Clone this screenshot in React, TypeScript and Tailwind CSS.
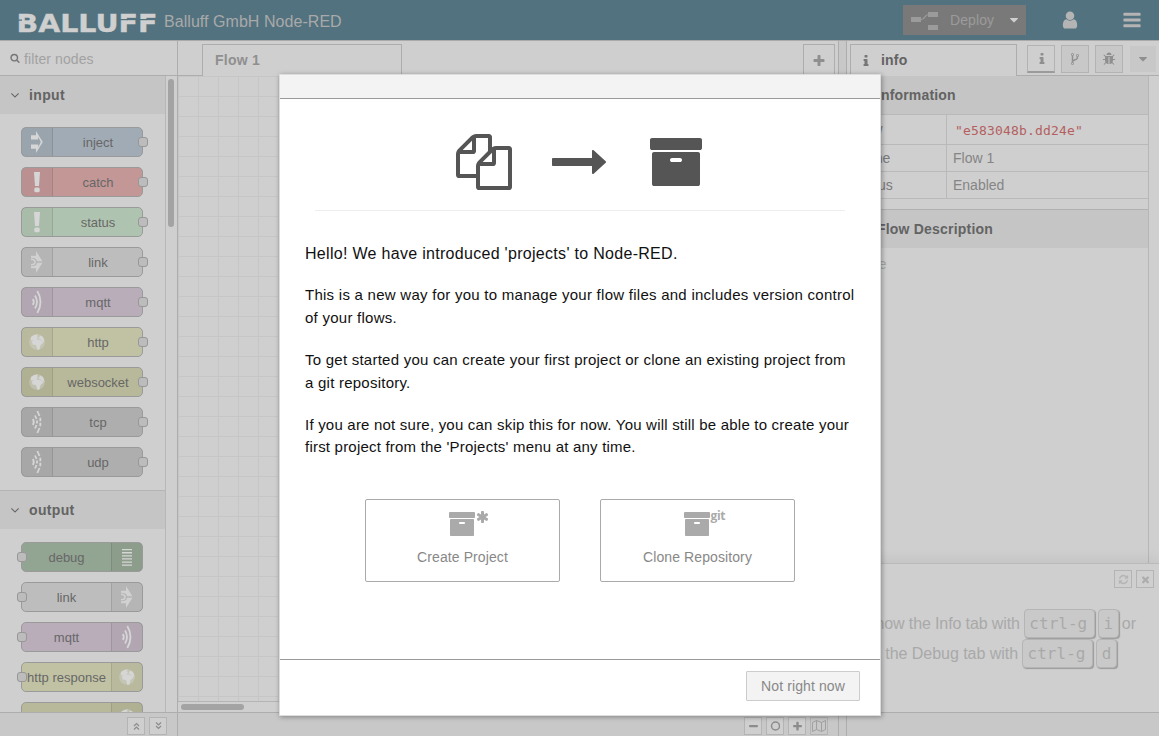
import React from "react";

const ICONS = {
  archive:
    "M1088 832q0-26-19-45t-45-19h-256q-26 0-45 19t-19 45 19 45 45 19h256q26 0 45-19t19-45zm576-192v960q0 26-19 45t-45 19h-1408q-26 0-45-19t-19-45v-960q0-26 19-45t45-19h1408q26 0 45 19t19 45zm64-448v256q0 26-19 45t-45 19h-1536q-26 0-45-19t-19-45v-256q0-26 19-45t45-19h1536q26 0 45 19t19 45z",
  files:
    "M1696 384q40 0 68 28t28 68v1216q0 40-28 68t-68 28h-960q-40 0-68-28t-28-68v-288h-544q-40 0-68-28t-28-68v-672q0-40 20-88t48-76l408-408q28-28 76-48t88-20h416q40 0 68 28t28 68v328q68-40 128-40h416zm-544 213l-299 299h299v-299zm-640-384l-299 299h299v-299zm196 647l316-316v-416h-384v416q0 40-28 68t-68 28h-416v640h512v-256q0-40 20-88t48-76zm956 804v-1152h-384v416q0 40-28 68t-68 28h-416v640h896z",
  arrow:
    "M1728 893q0 14-10 24l-384 354q-16 14-35 6-19-9-19-29v-224h-1248q-14 0-23-9t-9-23v-192q0-14 9-23t23-9h1248v-224q0-21 19-29t35 5l384 350q10 10 10 23z",
  user:
    "M1536 1399q0 109-62.5 187t-150.5 78h-854q-88 0-150.5-78t-62.5-187q0-85 8.5-160.5t31.5-152 58.5-131 94-89 134.5-34.5q131 128 313 128t313-128q76 0 134.5 34.5t94 89 58.5 131 31.5 152 8.5 160.5zm-256-887q0 159-112.5 271.5t-271.5 112.5-271.5-112.5-112.5-271.5 112.5-271.5 271.5-112.5 271.5 112.5 112.5 271.5z",
  bars:
    "M1664 1344v128q0 26-19 45t-45 19h-1408q-26 0-45-19t-19-45v-128q0-26 19-45t45-19h1408q26 0 45 19t19 45zm0-512v128q0 26-19 45t-45 19h-1408q-26 0-45-19t-19-45v-128q0-26 19-45t45-19h1408q26 0 45 19t19 45zm0-512v128q0 26-19 45t-45 19h-1408q-26 0-45-19t-19-45v-128q0-26 19-45t45-19h1408q26 0 45 19t19 45z",
  search:
    "M1216 832q0-185-131.5-316.5t-316.5-131.5-316.5 131.5-131.5 316.5 131.5 316.5 316.5 131.5 316.5-131.5 131.5-316.5zm512 832q0 52-38 90t-90 38q-54 0-90-38l-343-342q-179 124-399 124-143 0-273.5-55.5t-225-150-150-225-55.5-273.5 55.5-273.5 150-225 225-150 273.5-55.5 273.5 55.5 225 150 150 225 55.5 273.5q0 220-124 399l343 343q37 37 37 90z",
  angle:
    "M1395 736q0 13-10 23l-466 466q-10 10-23 10t-23-10l-466-466q-10-10-10-23t10-23l50-50q10-10 23-10t23 10l393 393 393-393q10-10 23-10t23 10l50 50q10 10 10 23z",
  plus:
    "M1600 736v192q0 40-28 68t-68 28h-416v416q0 40-28 68t-68 28h-192q-40 0-68-28t-28-68v-416h-416q-40 0-68-28t-28-68v-192q0-40 28-68t68-28h416v-416q0-40 28-68t68-28h192q40 0 68 28t28 68v416h416q40 0 68 28t28 68z",
  minus:
    "M1600 736v192q0 40-28 68t-68 28h-1216q-40 0-68-28t-28-68v-192q0-40 28-68t68-28h1216q40 0 68 28t28 68z",
  info:
    "M1216 1344v128q0 26-19 45t-45 19h-512q-26 0-45-19t-19-45v-128q0-26 19-45t45-19h64v-384h-64q-26 0-45-19t-19-45v-128q0-26 19-45t45-19h384q26 0 45 19t19 45v576h64q26 0 45 19t19 45zm-128-1152v192q0 26-19 45t-45 19h-256q-26 0-45-19t-19-45v-192q0-26 19-45t45-19h256q26 0 45 19t19 45z",
  caret:
    "M1408 704q0 26-19 45l-448 448q-19 19-45 19t-45-19l-448-448q-19-19-19-45t19-45 45-19h896q26 0 45 19t19 45z",
  times:
    "M1490 1322q0 40-28 68l-136 136q-28 28-68 28t-68-28l-294-294-294 294q-28 28-68 28t-68-28l-136-136q-28-28-28-68t28-68l294-294-294-294q-28-28-28-68t28-68l136-136q28-28 68-28t68 28l294 294 294-294q28-28 68-28t68 28l136 136q28 28 28 68t-28 68l-294 294 294 294q28 28 28 68z",
  asterisk:
    "M1482 1050q46 26 59.5 77.5t-12.5 97.5l-64 110q-26 46-77.5 59.5t-97.5-12.5l-266-153v307q0 52-38 90t-90 38h-128q-52 0-90-38t-38-90v-307l-266 153q-46 26-97.5 12.5t-77.5-59.5l-64-110q-26-46-12.5-97.5t59.5-77.5l266-154-266-154q-46-26-59.5-77.5t12.5-97.5l64-110q26-46 77.5-59.5t97.5 12.5l266 153v-307q0-52 38-90t90-38h128q52 0 90 38t38 90v307l266-153q46-26 97.5-12.5t77.5 59.5l64 110q26 46 12.5 97.5t-59.5 77.5l-266 154z",
  refresh:
    "M1639 1056q0 5-1 7-64 268-268 434.5t-478 166.5q-146 0-282.5-55t-243.5-157l-129 129q-19 19-45 19t-45-19-19-45v-448q0-26 19-45t45-19h448q26 0 45 19t19 45-19 45l-137 137q71 66 161 102t187 36q134 0 250-65t186-179q11-17 53-117 8-23 30-23h192q13 0 22.5 9.5t9.5 22.5zm25-800v448q0 26-19 45t-45 19h-448q-26 0-45-19t-19-45 19-45l138-138q-148-137-349-137-134 0-250 65t-186 179q-11 17-53 117-8 23-30 23h-199q-13 0-22.5-9.5t-9.5-22.5v-7q65-268 270-434.5t480-166.5q146 0 284 55.5t245 156.5l130-129q19-19 45-19t45 19 19 45z",
  fork:
    "M672 1472q0-40-28-68t-68-28-68 28-28 68 28 68 68 28 68-28 28-68zm0-1152q0-40-28-68t-68-28-68 28-28 68 28 68 68 28 68-28 28-68zm640 128q0-40-28-68t-68-28-68 28-28 68 28 68 68 28 68-28 28-68zm96 0q0 52-26 96.5t-70 69.5q-2 287-226 414-67 38-203 81-128 40-169.5 71t-41.5 100v26q44 25 70 69.5t26 96.5q0 80-56 136t-136 56-136-56-56-136q0-52 26-96.5t70-69.5v-820q-44-25-70-69.5t-26-96.5q0-80 56-136t136-56 136 56 56 136q0 52-26 96.5t-70 69.5v497q54-26 154-57 55-17 87.5-29.5t70.5-31 59-39.5 40.5-51 28-69.5 8.5-91.5q-44-25-70-69.5t-26-96.5q0-80 56-136t136-56 136 56 56 136z",
  bug:
    "M1696 960q0 26-19 45t-45 19h-224q0 171-67 290l208 209q19 19 19 45t-19 45q-18 19-45 19t-45-19l-198-197q-5 5-15 13t-42 28.5-65 36.5-82 29-97 13v-896h-128v896q-51 0-101.5-13.5t-87-33-66-39-43.5-32.5l-15-14-183 207q-20 21-48 21-24 0-43-16-19-18-20.5-44.5t15.5-46.5l202-227q-58-114-58-274h-224q-26 0-45-19t-19-45 19-45 45-19h224v-294l-173-173q-19-19-19-45t19-45 45-19 45 19l173 173h844l173-173q19-19 45-19t45 19 19 45-19 45l-173 173v294h224q26 0 45 19t19 45zm-480-576h-640q0-133 93.5-226.5t226.5-93.5 226.5 93.5 93.5 226.5z",
};

function Icon({ name, className }: { name: keyof typeof ICONS; className: string }) {
  return (
    <svg viewBox="0 0 1792 1792" fill="currentColor" className={"shrink-0 " + className}>
      <path d={ICONS[name]} />
    </svg>
  );
}

type Glyph = "inject" | "alert" | "link" | "waves" | "globe" | "dashes" | "lines";

function NodeGlyph({ kind }: { kind: Glyph }) {
  return (
    <svg width="30" height="28" viewBox="0 0 30 28" className="block text-[#d6d6d6]" fill="currentColor">
      {kind === "inject" && <path d="M9 7.200h5V3L20.800 14 14 25v-4.200H9V16.500h7.200v2.700l2.600-5.200-2.600-5.200v2.700H9z" />}
      {kind === "alert" && (
        <>
          <path d="M12 4h6l-1 14h-4z" />
          <rect x="12.300" y="19.500" width="5.400" height="4.800" rx="1.500" />
        </>
      )}
      {kind === "link" && (
        <g opacity=".85">
          <path d="M14 3l6.500 10.300h-5.300a4.500 4.500 0 0 0-3-3.300L9 9.800V7.800h5zM14 25l6.500-10.300h-5.300a4.500 4.500 0 0 1-3 3.300L9 18.200v2h5z" />
          <path d="M9 11.300q4 0 4 2.700t-4 2.700" fill="none" stroke="currentColor" strokeWidth="1.600" />
        </g>
      )}
      {(kind === "waves" || kind === "dashes") && (
        <g fill="none" stroke="currentColor" strokeWidth="1.800">
          <path d="M10.800 11q2 3 0 6" />
          {kind === "waves" ? (
            <>
              <path d="M13 7.500q4 6.500 0 13" />
              <path d="M15.300 3q6.400 11 0 22" />
            </>
          ) : (
            <>
              <path d="M13 7.500l1.500 3.500M15 12.500v3M14.500 17l-1.500 3.500" />
              <path d="M15.300 3l2.200 5M18.300 9.700v3.600M18.300 14.700v3.600M17.500 20l-2.200 5" />
            </>
          )}
        </g>
      )}
      {kind === "globe" && (
        <>
          <circle cx="15" cy="14" r="7.800" opacity=".4" />
          <path d="M9 9q3-3 7-2.500l-1.500 2 2 .5-2.500 2.500-3 .5-2 .5zM10 13l4-2 5 1.500 2.500 2-3 2.500-1 4.500-2 .5-1.500-5-3.500-.5zM18 7.500l3 1.500 1.500 4.500-2 0-2-2-2-.5z" />
        </>
      )}
      {kind === "lines" && (
        <path d="M10 6h10v1.300H10zM10 9.100h10v1.300H10zM10 12.200h10v1.300H10zM10 15.300h10v1.300H10zM10 18.400h10v1.300H10zM10 21.500h10v1.300H10z" />
      )}
    </svg>
  );
}

function PaletteNode({ label, bg, glyph, out }: { label?: string; bg: string; glyph: Glyph; out?: boolean }) {
  return (
    <div
      className={
        "relative flex h-[30px] w-[122px] shrink-0 rounded-[5px] border border-[#9a9a9a] text-[13px] leading-[29px] text-[#676767] " +
        bg +
        (out ? " flex-row-reverse" : "")
      }
    >
      <div
        className={
          "flex w-[31px] shrink-0 justify-center bg-black/[0.04] " +
          (out ? "border-l border-black/10" : "border-r border-black/10")
        }
      >
        <NodeGlyph kind={glyph} />
      </div>
      <div className={"flex grow justify-center whitespace-nowrap " + (out ? "" : "pl-px")}>
        {label && <span className="-mx-2">{label}</span>}
      </div>
      <div
        className={
          "absolute top-[9px] h-[10px] w-[10px] rounded-[3px] border border-[#979797] bg-[#bcbcbc] " +
          (out ? "-left-[5px]" : "-right-[6px]")
        }
      />
    </div>
  );
}

function Category({ title }: { title: string }) {
  return (
    <div className="flex h-[38px] shrink-0 items-center bg-[#c5c5c5] pl-2 text-[14px] font-bold tracking-[0.35px] text-[#636363]">
      <Icon name="angle" className="mr-[7px] h-[14px] w-[14px]" />
      {title}
    </div>
  );
}

function FootButton({ children, className = "" }: { children: React.ReactNode; className?: string }) {
  return (
    <div
      className={
        "flex h-[18px] w-[18px] items-center justify-center border border-[#b4b4b4] bg-[#cfcfcf] text-[#8c8c8c] " + className
      }
    >
      {children}
    </div>
  );
}

function Key({ children, className = "w-[71px] pr-[2px]" }: { children: string; className?: string }) {
  return (
    <span
      className={
        "flex h-[29px] shrink-0 justify-center rounded-[4px] border border-[#b5b5b5] bg-[#c9c9c9] font-['DejaVu_Sans_Mono',monospace] leading-[28px] shadow-[1px_1px_1px_#999] " +
        className
      }
    >
      {children}
    </span>
  );
}

function Header() {
  return (
    <header className="flex h-[41px] shrink-0 items-center border-b border-[#aaaaaa] bg-[#53727f] text-[#a9a9a9]">
      <svg width="142" height="32" className="ml-4 mt-[3px]" fill="#cfcfcf">
        <text
          x="0.500"
          y="25.500"
          fontFamily="DejaVu Sans, sans-serif"
          fontWeight="700"
          fontSize="25"
          textLength="141"
          lengthAdjust="spacingAndGlyphs"
          stroke="#cfcfcf"
          strokeWidth=".4"
        >
          BALLUFF
        </text>
        <g fill="#53727f">
          <rect x="1" y="13.500" width="5" height="1.200" />
          <rect x="103" y="13" width="9" height="1.200" />
          <rect x="122" y="13" width="9" height="1.200" />
        </g>
      </svg>
      <span className="ml-1.5 mt-[3px] grow text-[16px] tracking-[0.05px]">Balluff GmbH Node-RED</span>
      <div className="flex h-[30px] w-[123px] items-center bg-[#797979] pl-2 text-[14px] text-[#9b9b9b]">
        <svg width="28" height="20" viewBox="0 0 28 20" fill="#9b9b9b">
          <path d="M0 7h10v5H0zM17 2h10v5H17zM17 15h10v5H17z" />
          <path d="M10 9.500c5 0 3-5 7.500-5" fill="none" stroke="#9b9b9b" strokeWidth="1.200" />
        </svg>
        <span className="ml-[11px] tracking-[0.1px]">Deploy</span>
        <Icon name="caret" className="ml-[13px] h-[14px] w-[14px] text-[#cfcfcf]" />
      </div>
      <Icon name="user" className="ml-[34px] h-5 w-5 text-[#b4b4b4]" />
      <Icon name="bars" className="ml-[42px] mr-[17px] h-5 w-5 text-[#b4b4b4]" />
    </header>
  );
}

function Palette() {
  return (
    <aside className="flex w-[178px] shrink-0 flex-col border-r border-[#adadad]">
      <div className="flex h-[35px] shrink-0 items-center border-b border-[#adadad] pl-[10px] text-[14px] text-[#a2a2a2]">
        <Icon name="search" className="mr-[4px] h-[10px] w-[10px] text-[#777777]" />
        <span className="mt-[2px] tracking-[0.1px]">filter nodes</span>
      </div>
      <div className="flex h-[636px] shrink-0">
        <div className="flex w-[166px] flex-col overflow-hidden border-r border-[#b7b7b7]">
          <Category title="input" />
          <div className="flex h-[376px] shrink-0 flex-col gap-[10px] pl-[21px] pt-[13px]">
            <PaletteNode label="inject" bg="bg-[#a1abb5]" glyph="inject" />
            <PaletteNode label="catch" bg="bg-[#c29796]" glyph="alert" />
            <PaletteNode label="status" bg="bg-[#afc4b0]" glyph="alert" />
            <PaletteNode label="link" bg="bg-[#bdbdbd]" glyph="link" />
            <PaletteNode label="mqtt" bg="bg-[#b9adba]" glyph="waves" />
            <PaletteNode label="http" bg="bg-[#c1c2a4]" glyph="globe" />
            <PaletteNode label="websocket" bg="bg-[#b8b99a]" glyph="globe" />
            <PaletteNode label="tcp" bg="bg-[#aeaeae]" glyph="dashes" />
            <PaletteNode label="udp" bg="bg-[#aeaeae]" glyph="dashes" />
          </div>
          <div className="h-px shrink-0 bg-[#b4b4b4]" />
          <Category title="output" />
          <div className="flex flex-col gap-[10px] pl-[21px] pt-[13px]">
            <PaletteNode out label="debug" bg="bg-[#92a492]" glyph="lines" />
            <PaletteNode out label="link" bg="bg-[#bdbdbd]" glyph="link" />
            <PaletteNode out label="mqtt" bg="bg-[#b9adba]" glyph="waves" />
            <PaletteNode out label="http response" bg="bg-[#c1c2a4]" glyph="globe" />
            <PaletteNode out bg="bg-[#b8b99a]" glyph="globe" />
          </div>
        </div>
        <div className="ml-[2px] mt-[3px] h-[148px] w-[6px] rounded-full bg-[#a3a3a3]" />
      </div>
      <div className="flex grow justify-end gap-1 border-t border-[#adadad] bg-[#c8c8c8] pr-[10px] pt-1">
        <FootButton>
          <svg width="8" height="8" fill="none" stroke="currentColor" strokeWidth="1.200">
            <path d="M2 4l2.500-2.500L7 4M2 7.500L4.500 5 7 7.500" />
          </svg>
        </FootButton>
        <FootButton>
          <svg width="8" height="8" fill="none" stroke="currentColor" strokeWidth="1.200">
            <path d="M2 .5L4.500 3 7 .5M2 4l2.500 2.500L7 4" />
          </svg>
        </FootButton>
      </div>
    </aside>
  );
}

function Workspace() {
  return (
    <main className="flex w-[661px] shrink-0 flex-col border-r border-[#adadad]">
      <div className="flex h-[35px] shrink-0">
        <div className="w-6 border-b border-[#adadad]" />
        <div className="mt-[3px] w-[200px] border border-b-0 border-[#adadad] pl-[12px] text-[14px] font-bold leading-[31px] tracking-[0.25px] text-[#8f8f8f]">
          Flow 1
        </div>
        <div className="grow border-b border-[#adadad]" />
        <div className="mt-[3px] flex w-[32px] items-center justify-center border border-[#adadad]">
          <Icon name="plus" className="mt-[1px] h-[14px] w-[14px] text-[#8f8f8f]" />
        </div>
        <div className="w-[3px] border-b border-[#adadad]" />
      </div>
      <div className="h-[625px] shrink-0 bg-[linear-gradient(#c6c6c6_1px,transparent_1px),linear-gradient(90deg,#c6c6c6_1px,transparent_1px)] bg-[size:20px_20px]" />
      <div className="h-[11px] shrink-0 border-t border-[#b4b4b4] pl-[3px] pt-[2px]">
        <div className="h-[6px] w-[63px] rounded-full bg-[#a3a3a3]" />
      </div>
      <div className="flex grow justify-end gap-1 border-t border-[#adadad] bg-[#c8c8c8] pr-[10px] pt-1">
        <FootButton>
          <Icon name="minus" className="h-[11px] w-[11px]" />
        </FootButton>
        <FootButton>
          <svg width="10" height="10" fill="none" stroke="currentColor" strokeWidth="1.500">
            <circle cx="5.500" cy="5" r="4" />
          </svg>
        </FootButton>
        <FootButton>
          <Icon name="plus" className="h-[11px] w-[11px]" />
        </FootButton>
        <FootButton className="bg-[#c8c8c8]!">
          <svg width="14" height="12" fill="none" stroke="#a0a0a0" strokeWidth="1">
            <path d="M.5 2.500l4-2 5 2 4-2v9l-4 2-5-2-4 2zM4.500 .5v9M9.500 2.500v9" />
          </svg>
        </FootButton>
      </div>
    </main>
  );
}

function TabButton({ children, className }: { children: React.ReactNode; className: string }) {
  return (
    <div className={"mt-1 flex h-[28px] w-[28px] items-center justify-center border border-[#b3b3b3] text-[#8f8f8f] " + className}>
      {children}
    </div>
  );
}

function Row({ name, children, className }: { name: string; children: React.ReactNode; className: string }) {
  return (
    <div className={"flex border-b border-[#b9b9b9] text-[14px] " + className}>
      <div className="w-[100px] shrink-0 border-r border-[#b9b9b9] pl-[6px] text-[#7b7b7b]">{name}</div>
      <div className="pl-[6px] text-[#858585]">{children}</div>
    </div>
  );
}

function Sidebar() {
  return (
    <aside className="flex grow flex-col border-l border-[#adadad]">
      <div className="flex h-[35px] shrink-0">
        <div className="w-[3px] border-b border-[#adadad]" />
        <div className="mt-[3px] flex w-[167px] items-center border border-b-0 border-[#adadad] pl-2 text-[14px] font-bold tracking-[0.2px] text-[#636363]">
          <Icon name="info" className="mr-[8px] h-[14px] w-[14px] text-[#777777]" />
          info
        </div>
        <div className="flex grow border-b border-[#adadad] pl-[10px]">
          <TabButton className="mr-[6px] border-b-2 border-b-[#9b9b9b]">
            <Icon name="info" className="ml-px h-[14px] w-[14px]" />
          </TabButton>
          <TabButton className="mr-[6px] bg-[#c8c8c8]">
            <Icon name="fork" className="h-[14px] w-[14px]" />
          </TabButton>
          <TabButton className="mr-[7px] bg-[#c8c8c8]">
            <Icon name="bug" className="h-[14px] w-[14px]" />
          </TabButton>
          <div className="mt-[5px] flex h-[26px] w-[26px] items-center justify-center bg-[#c8c8c8] text-[#8f8f8f]">
            <Icon name="caret" className="h-[14px] w-[14px]" />
          </div>
        </div>
      </div>
      <div className="h-[487px] w-[302px] shrink-0 border-r border-[#b7b7b7]">
        <div className="h-[39px] border-b border-[#b9b9b9] bg-[#c5c5c5] pl-[30px] text-[14px] font-bold leading-[38px] tracking-[0.15px] text-[#636363]">
          Information
        </div>
        <Row name="Flow" className="h-[30px] leading-[29px]">
          <span className="pl-[2px] font-['DejaVu_Sans_Mono',monospace] text-[13px] leading-[31px] tracking-[0.17px] text-[#b4605f]">
            "e583048b.dd24e"
          </span>
        </Row>
        <Row name="Name" className="h-[27px] leading-[26px]">
          Flow 1
        </Row>
        <Row name="Status" className="h-[27px] leading-[26px]">
          Enabled
        </Row>
        <div className="mt-[10px] h-[39px] border-t border-[#b1b1b1] bg-[#c5c5c5] pl-[30px] text-[14px] font-bold leading-[38px] tracking-[0.2px] text-[#636363]">
          Flow Description
        </div>
        <div className="pl-[6px] pt-[6px] text-[14px] text-[#a5a5a5]">None</div>
      </div>
      <div className="h-[149px] shrink-0 border-t border-[#bababa] pr-[5px] shadow-[0_-4px_12px_rgba(0,0,0,0.06)]">
        <div className="flex justify-end gap-1 pt-[6px]">
          <FootButton className="text-[#b5b5b5]!">
            <Icon name="refresh" className="h-[11px] w-[11px]" />
          </FootButton>
          <FootButton className="text-[#adadad]!">
            <Icon name="times" className="h-[11px] w-[11px]" />
          </FootButton>
        </div>
        <div className="mt-[20px] flex h-[30px] items-center justify-end gap-[3px] pr-[18px] text-[16px] text-[#a9a9a9]">
          <span className="mr-px mt-[2px] tracking-[-0.12px]">Show the Info tab with</span>
          <Key>ctrl-g</Key>
          <Key className="w-[21px]">i</Key>
          <span className="mt-[2px]">or</span>
        </div>
        <div className="flex h-[30px] items-center justify-end gap-[3px] pr-[37px] text-[16px] text-[#a9a9a9]">
          <span className="mr-px mt-[2px] tracking-[-0.04px]">the Debug tab with</span>
          <Key>ctrl-g</Key>
          <Key className="w-[21px]">d</Key>
        </div>
      </div>
      <div className="grow border-t border-[#adadad] bg-[#c8c8c8]" />
    </aside>
  );
}

function ProjectButton({ label, badge }: { label: string; badge: React.ReactNode }) {
  return (
    <button className="flex h-[83px] w-[195px] flex-col items-center rounded-[2px] border border-[#aaaaaa] bg-white pt-[10px] text-[14px] text-[#888888]">
      <span className="mr-[2px] flex h-[28px] w-[28px] items-start text-[#aaaaaa]">
        <Icon name="archive" className="h-[28px] w-[28px]" />
        {badge}
      </span>
      <span className="mt-[9px] leading-5 tracking-[0.1px]">{label}</span>
    </button>
  );
}

function Dialog() {
  return (
    <div className="absolute left-[279px] top-[74px] flex h-[642px] w-[602px] flex-col border border-[#dddddd] bg-white shadow-[1px_1px_5px_rgba(0,0,0,0.35)]">
      <div className="h-6 shrink-0 border-b border-[#999999] bg-[#f3f3f3]" />
      <div className="grow px-[25px] text-[15px] leading-[22.5px] text-[#111111]">
        <div className="mx-[10px] flex h-[112px] items-start justify-center gap-[40px] border-b border-[#eeeeee] pt-[35px] text-[#555555]">
          <Icon name="files" className="h-[56px] w-[56px]" />
          <Icon name="arrow" className="h-[56px] w-[56px]" />
          <Icon name="archive" className="h-[56px] w-[56px]" />
        </div>
        <p className="mt-[32px] whitespace-nowrap text-[16px] tracking-[0.3px]">Hello! We have introduced 'projects' to Node-RED.</p>
        <p className="mt-[17px] whitespace-nowrap leading-[23px] tracking-[0.26px]">
          This is a new way for you to manage your flow files and includes version control
          <br />
          of your flows.
        </p>
        <p className="mt-[19px] whitespace-nowrap leading-[23px] tracking-[0.24px]">
          To get started you can create your first project or clone an existing project from
          <br />a git repository.
        </p>
        <p className="mt-[20.5px] whitespace-nowrap leading-[22px] tracking-[0.21px]">
          If you are not sure, you can skip this for now. You will still be able to create your
          <br />
          first project from the 'Projects' menu at any time.
        </p>
        <div className="mt-[40.5px] flex justify-center gap-[40px]">
          <ProjectButton
            label="Create Project"
            badge={<Icon name="asterisk" className="h-[14px] w-[14px]" />}
          />
          <ProjectButton
            label="Clone Repository"
            badge={
              <span className="-mt-[2px] font-['Open_Sans',sans-serif] text-[12px] font-bold leading-[15px] tracking-[-0.4px]">
                git
              </span>
            }
          />
        </div>
      </div>
      <div className="flex h-[56px] shrink-0 justify-end border-t border-[#999999] pr-5 pt-[11px]">
        <button className="h-[30px] w-[114px] rounded-[1px] border border-[#cccccc] bg-[#f3f3f3] text-[14px] tracking-[0.1px] text-[#888888]">
          Not right now
        </button>
      </div>
    </div>
  );
}

export default function App() {
  return (
    <div className="relative flex h-[736px] w-[1159px] flex-col overflow-hidden bg-[#cfcfcf] font-['Liberation_Sans',Arial,sans-serif]">
      <Header />
      <div className="flex grow">
        <Palette />
        <Workspace />
        <div className="w-[7px] shrink-0 bg-[#c8c8c8]" />
        <Sidebar />
      </div>
      <Dialog />
    </div>
  );
}
